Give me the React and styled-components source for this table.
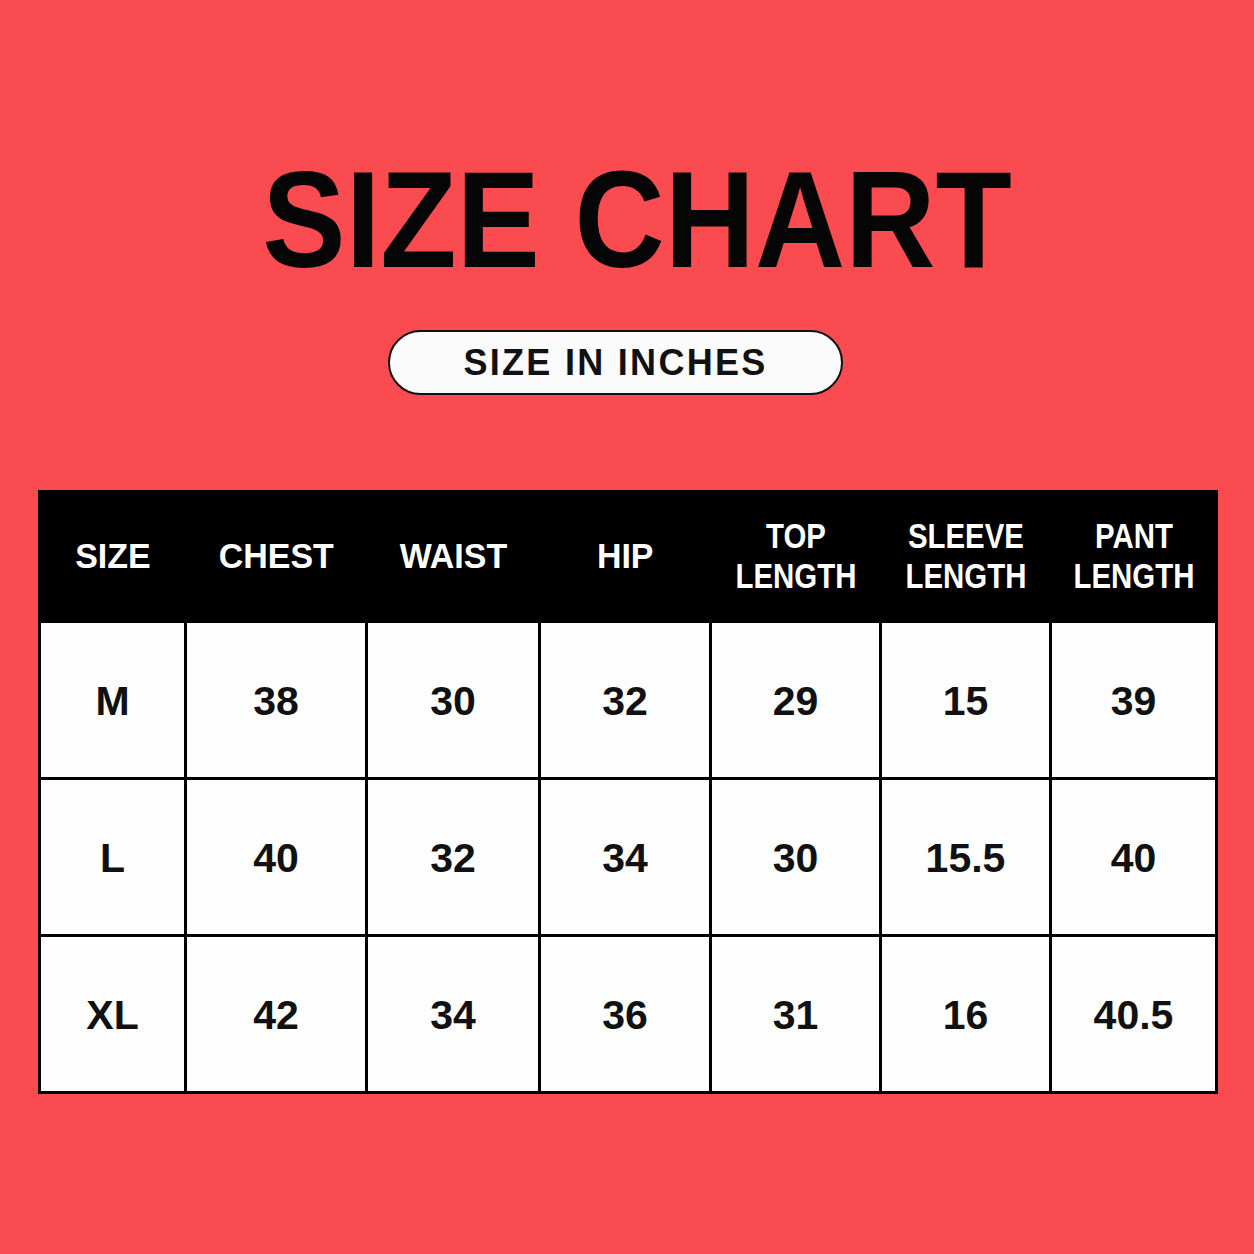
import React from "react";
import styled, { createGlobalStyle } from "styled-components";

const Global = createGlobalStyle`
  html, body { margin: 0; padding: 0; }
  body { background: #F94B50; font-family: "Liberation Sans", Arial, sans-serif; }
`;

const Page = styled.div`
  width: 1254px;
  height: 1254px;
  background: #F94B50;
  display: flex;
  flex-direction: column;
  align-items: center;
  padding-top: 150px;
  box-sizing: border-box;
`;

const Title = styled.h1`
  margin: 0;
  font-family: "Liberation Sans", Arial, sans-serif;
  font-weight: 700;
  font-size: 138px;
  line-height: 138px;
  color: #050505;
  transform: scaleX(0.905);
  white-space: nowrap;
  margin-left: 19px;
`;

const Pill = styled.div`
  margin-top: 42px;
  width: 455px;
  height: 65px;
  box-sizing: border-box;
  border: 2px solid #111;
  border-radius: 33px;
  background: #fbfbfb;
  display: flex;
  align-items: center;
  justify-content: center;
  font-weight: 700;
  font-size: 36px;
  letter-spacing: 2.3px;
  color: #111;
  margin-left: -23px;
`;

const Table = styled.div`
  margin-top: 95px;
  align-self: flex-start;
  margin-left: 38px;
  width: 1180px;
  box-sizing: border-box;
  background: #000;
  display: grid;
  grid-template-columns: 143px 178px 170px 168px 167px 167px 163px;
  grid-template-rows: 130px repeat(3, 154px);
  gap: 3px;
  padding: 0 3px 3px 3px;
`;

const HeadCell = styled.div`
  background: #000;
  color: #fff;
  display: flex;
  align-items: center;
  justify-content: center;
  text-align: center;
  font-weight: 700;
  font-size: 35px;
  line-height: 40px;
  padding-top: 2px;
`;

const HeadLabel = styled.span`
  display: inline-block;
  transform: ${(p) => (p.$narrow ? "scaleX(0.84)" : "scaleX(0.97)")};
  white-space: nowrap;
`;

const Cell = styled.div`
  background: #fdfdfd;
  color: #111;
  display: flex;
  align-items: center;
  justify-content: center;
  font-weight: 700;
  font-size: 41px;
  padding-top: 3px;
`;

const headers = [
  ["SIZE"],
  ["CHEST"],
  ["WAIST"],
  ["HIP"],
  ["TOP", "LENGTH"],
  ["SLEEVE", "LENGTH"],
  ["PANT", "LENGTH"],
];

const rows = [
  ["M", "38", "30", "32", "29", "15", "39"],
  ["L", "40", "32", "34", "30", "15.5", "40"],
  ["XL", "42", "34", "36", "31", "16", "40.5"],
];

export default function App() {
  return (
    <>
      <Global />
      <Page>
        <Title>SIZE CHART</Title>
        <Pill>SIZE IN INCHES</Pill>
        <Table>
          {headers.map((h, i) => (
            <HeadCell key={i}>
              <HeadLabel $narrow={h.length > 1}>
                {h.map((line, j) => (
                  <React.Fragment key={j}>
                    {j > 0 && <br />}
                    {line}
                  </React.Fragment>
                ))}
              </HeadLabel>
            </HeadCell>
          ))}
          {rows.map((r, i) =>
            r.map((v, j) => <Cell key={`${i}-${j}`}>{v}</Cell>)
          )}
        </Table>
      </Page>
    </>
  );
}
